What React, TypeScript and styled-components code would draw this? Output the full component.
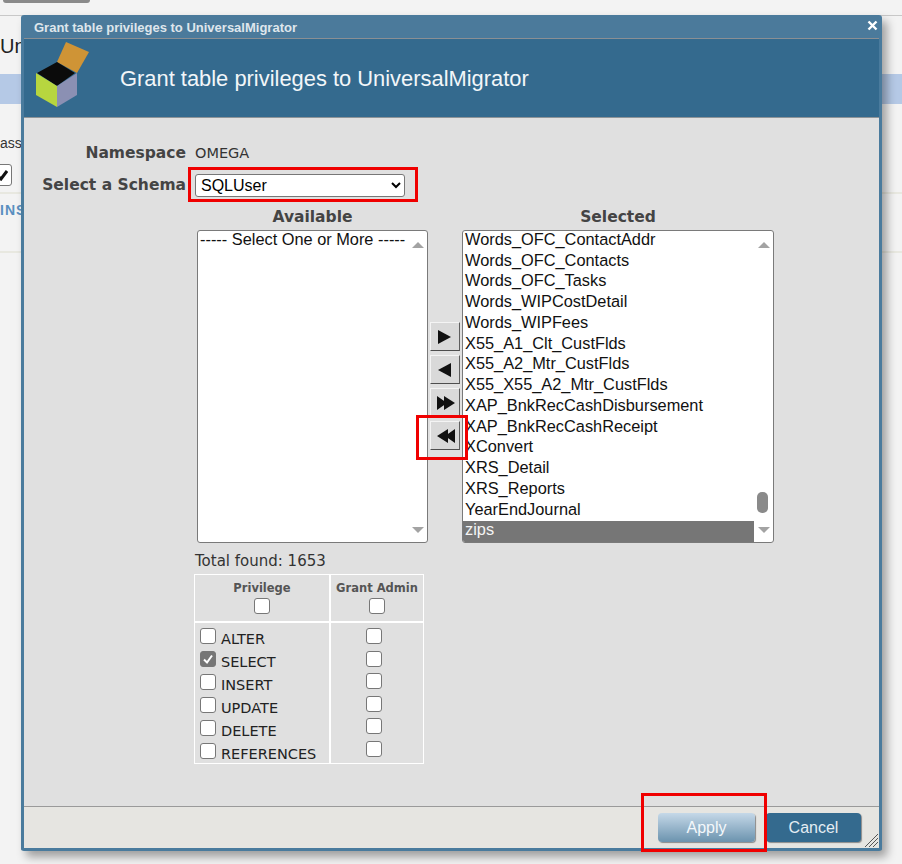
import styled, { createGlobalStyle } from "styled-components";

const GlobalStyle = createGlobalStyle`
  html, body {
    margin: 0;
    padding: 0;
    background: #f3f3f3;
  }
`;

const Page = styled.div`
  position: relative;
  width: 902px;
  height: 864px;
  overflow: hidden;
  font-family: "Liberation Sans", Arial, sans-serif;
`;

const TopButton = styled.div`
  width: 87px;
  height: 3px;
  margin-left: 3px;
  background: #8a8a8a;
  border-radius: 0 0 4px 4px;
`;

const TopRule = styled.div`
  margin-top: 12px;
  height: 1px;
  background: #c8c8c8;
`;

const PageName = styled.div`
  margin-top: 19px;
  height: 39px;
  font-size: 20px;
  color: #222;
  line-height: 22px;
`;

const BlueBar = styled.div`
  height: 30px;
  background: #b5c9e6;
`;

const PassLabel = styled.div`
  margin-top: 30px;
  font-size: 14px;
  line-height: 18px;
  color: #333;
`;

const BackCheck = styled.div`
  margin-top: 12px;
  margin-left: -10px;
  width: 22px;
  height: 22px;
  box-sizing: border-box;
  display: flex;
  align-items: center;
  justify-content: center;
  border: 1px solid #777;
  border-radius: 3px;
  background: #fff;
`;

const BackCheckMark = styled.svg`
  width: 14px;
  height: 12px;
`;

const BackRule = styled.div<{ $gap: number }>`
  margin-top: ${(p) => p.$gap}px;
  height: 2px;
  background: #e8e8e0;
`;

const InsLabel = styled.div`
  margin-top: 8px;
  font-size: 14px;
  line-height: 16px;
  font-weight: bold;
  letter-spacing: 1px;
  color: #5a8fc0;
`;

const Dialog = styled.div`
  position: absolute;
  left: 21px;
  top: 15px;
  width: 861px;
  height: 836px;
  box-sizing: border-box;
  display: flex;
  flex-direction: column;
  border: 3px solid #4a7b9d;
  border-top: 0;
  border-radius: 3px;
  background: #e0e0e0;
  box-shadow: 5px 6px 10px rgba(0, 0, 0, 0.35);
`;

const TitleBar = styled.div`
  height: 24px;
  flex: none;
  display: flex;
  align-items: center;
  justify-content: space-between;
  padding: 2px 1px 0 10px;
  box-sizing: border-box;
  background: #4b7a9b;
  border-bottom: 1px solid #8a8f94;
  font-size: 13px;
  font-weight: bold;
  color: #dfe6ec;
`;

const CloseIcon = styled.svg`
  width: 11px;
  height: 11px;
  margin-top: -4px;
`;

const Header = styled.div`
  position: relative;
  height: 79px;
  flex: none;
  display: flex;
  align-items: center;
  padding: 1px 0 0 96px;
  box-sizing: border-box;
  background: #346a8e;
  border-bottom: 1px solid #8e9498;
  font-size: 21.9px;
  color: #f2f6f9;
`;

const Logo = styled.svg`
  position: absolute;
  left: 12px;
  top: 2px;
  width: 56px;
  height: 68px;
`;

const Body = styled.div`
  flex: 1;
  display: flex;
  flex-direction: column;
  padding: 23px 0 0 18px;
`;

const FieldRow = styled.div<{ $height: number }>`
  display: flex;
  align-items: center;
  height: ${(p) => p.$height}px;
  gap: 9px;
`;

const FieldLabel = styled.div`
  width: 144px;
  text-align: right;
  font-family: "DejaVu Sans", Verdana, sans-serif;
  font-size: 15.5px;
  font-weight: bold;
  white-space: nowrap;
  color: #444;
`;

const FieldValue = styled.div`
  font-family: "DejaVu Sans", Tahoma, sans-serif;
  font-size: 14.5px;
  color: #333;
`;

const SchemaSelect = styled.select`
  width: 210px;
  height: 23px;
  padding: 0 1px;
  font-family: "Liberation Sans", Arial, sans-serif;
  font-size: 16px;
  color: #000;
  background: #fff;
  border: 1px solid #777;
  border-radius: 3px;
`;

const Columns = styled.div`
  display: flex;
  margin-left: 155px;
`;

const ListColumn = styled.div<{ $width: number }>`
  width: ${(p) => p.$width}px;
  display: flex;
  flex-direction: column;
`;

const ListTitle = styled.div`
  height: 24px;
  line-height: 22px;
  text-align: center;
  font-family: "DejaVu Sans", Verdana, sans-serif;
  font-size: 15.5px;
  font-weight: bold;
  color: #444;
`;

const ListBox = styled.div`
  height: 313px;
  box-sizing: border-box;
  display: flex;
  background: #fff;
  border: 1px solid #7a7a7a;
  border-radius: 3px;
  overflow: hidden;
`;

const ListItems = styled.div`
  flex: 1;
  min-width: 0;
  display: flex;
  flex-direction: column;
`;

const ListItem = styled.div<{ $selected?: boolean }>`
  height: 20.75px;
  line-height: 17px;
  padding-left: 2px;
  font-size: 16.35px;
  white-space: nowrap;
  color: ${(p) => (p.$selected ? "#f4f4f4" : "#111")};
  background: ${(p) => (p.$selected ? "#767676" : "transparent")};
`;

const ScrollTrack = styled.div`
  width: 19px;
  flex: none;
  display: flex;
  flex-direction: column;
  align-items: center;
  justify-content: space-between;
  padding: 11px 0 9px;
  box-sizing: border-box;
`;

const ScrollArrow = styled.div<{ $down?: boolean }>`
  width: 0;
  height: 0;
  border-left: 6px solid transparent;
  border-right: 6px solid transparent;
  ${(p) =>
    p.$down ? "border-top: 6px solid #a3a3a3;" : "border-bottom: 6px solid #a3a3a3;"}
`;

const ScrollThumb = styled.div`
  position: absolute;
  right: 5px;
  bottom: 29px;
  width: 11px;
  height: 21px;
  border-radius: 5px;
  background: #8a8a8a;
`;

const SelectedBox = styled(ListBox)`
  position: relative;
`;

const MoveButtons = styled.div`
  width: 34px;
  flex: none;
  display: flex;
  flex-direction: column;
  gap: 4px;
  padding: 116px 0 0 2px;
  box-sizing: border-box;
`;

const MoveButton = styled.button`
  width: 30px;
  height: 29px;
  padding: 0;
  display: flex;
  align-items: center;
  justify-content: center;
  box-sizing: border-box;
  background: #d9d9d9;
  border: 0;
  border-top: 1px solid #f4f4f4;
  border-left: 1px solid #f4f4f4;
  border-right: 1px solid #5e5e5e;
  border-bottom: 1px solid #4e4e4e;
`;

const MoveIcon = styled.svg`
  width: 22px;
  height: 16px;
`;

const TotalFound = styled.div`
  margin: 9px 0 0 153px;
  height: 18px;
  line-height: 18px;
  font-family: "DejaVu Sans", Tahoma, sans-serif;
  font-size: 15px;
  color: #333;
`;

const PrivilegeGrid = styled.div`
  margin: 4px 0 0 152px;
  width: 230px;
  display: grid;
  grid-template-columns: 134px 1fr;
  gap: 2px;
  padding: 1px;
  box-sizing: border-box;
  background: #fff;
`;

const GridHead = styled.div`
  height: 46px;
  box-sizing: border-box;
  display: flex;
  flex-direction: column;
  align-items: center;
  padding-top: 6px;
  gap: 3px;
  background: #e0e0e0;
  font-family: "DejaVu Sans", Verdana, sans-serif;
  font-size: 11.5px;
  font-weight: bold;
  color: #555;
`;

const GridCell = styled.div<{ $center?: boolean }>`
  height: 140px;
  box-sizing: border-box;
  display: flex;
  flex-direction: column;
  align-items: ${(p) => (p.$center ? "center" : "flex-start")};
  padding: 5px ${(p) => (p.$center ? "6px" : "0")} 0 ${(p) => (p.$center ? "0" : "5px")};
  background: #e0e0e0;
`;

const PrivRow = styled.div`
  height: 23.2px;
  display: flex;
  gap: 5px;
  font-family: "DejaVu Sans", Tahoma, sans-serif;
  font-size: 14.5px;
  line-height: 23px;
  color: #222;
`;

const Check = styled.span<{ $checked?: boolean }>`
  width: 16px;
  height: 16px;
  flex: none;
  display: flex;
  align-items: center;
  justify-content: center;
  box-sizing: border-box;
  border: 1px solid #777;
  border-radius: 3px;
  background: ${(p) => (p.$checked ? "#767676" : "#fff")};
`;

const CheckMark = styled.svg`
  width: 12px;
  height: 12px;
`;

const Footer = styled.div`
  height: 42px;
  flex: none;
  display: flex;
  align-items: center;
  justify-content: flex-end;
  gap: 11px;
  padding-right: 18px;
  box-sizing: border-box;
  background: #e6e5e1;
  border-top: 1px solid #9a9a9a;
`;

const FooterButton = styled.button<{ $primary?: boolean }>`
  width: ${(p) => (p.$primary ? 97 : 95)}px;
  height: 29px;
  padding: 0;
  border: 0;
  border-radius: 4px;
  font-family: "Liberation Sans", Arial, sans-serif;
  font-size: 16px;
  color: ${(p) => (p.$primary ? "#f4f8fb" : "#e4edf3")};
  background: ${(p) =>
    p.$primary ? "linear-gradient(#c5d8e8, #6b93ae)" : "#346a8e"};
  box-shadow: 1px 1px 1px #8a8a8a;
`;

const Grip = styled.svg`
  position: absolute;
  right: 0;
  bottom: 0;
  width: 15px;
  height: 15px;
`;

const Callout = styled.div<{ $l: number; $t: number; $w: number; $h: number }>`
  position: absolute;
  left: ${(p) => p.$l}px;
  top: ${(p) => p.$t}px;
  width: ${(p) => p.$w}px;
  height: ${(p) => p.$h}px;
  box-sizing: border-box;
  border: 3px solid #f00000;
  pointer-events: none;
`;

const SELECTED = [
  "Words_OFC_ContactAddr",
  "Words_OFC_Contacts",
  "Words_OFC_Tasks",
  "Words_WIPCostDetail",
  "Words_WIPFees",
  "X55_A1_Clt_CustFlds",
  "X55_A2_Mtr_CustFlds",
  "X55_X55_A2_Mtr_CustFlds",
  "XAP_BnkRecCashDisbursement",
  "XAP_BnkRecCashReceipt",
  "XConvert",
  "XRS_Detail",
  "XRS_Reports",
  "YearEndJournal",
];

const PRIVILEGES = ["ALTER", "SELECT", "INSERT", "UPDATE", "DELETE", "REFERENCES"];

const MOVES = [
  "M4 1 L17 8 L4 15 Z",
  "M17 1 L4 8 L17 15 Z",
  "M3 1 L13 8 L3 15 Z M10 1 L21 8 L10 15 Z",
  "M21 1 L11 8 L21 15 Z M14 1 L3 8 L14 15 Z",
];

export default function App() {
  return (
    <Page>
      <GlobalStyle />
      <TopButton />
      <TopRule />
      <PageName>Un</PageName>
      <BlueBar />
      <PassLabel>ass</PassLabel>
      <BackCheck>
        <BackCheckMark viewBox="0 0 14 12">
          <path d="M3 6 L7 10 L13 2" fill="none" stroke="#111" strokeWidth="3" />
        </BackCheckMark>
      </BackCheck>
      <BackRule $gap={6} />
      <InsLabel>INS</InsLabel>
      <BackRule $gap={33} />

      <Dialog>
        <TitleBar>
          Grant table privileges to UniversalMigrator
          <CloseIcon viewBox="0 0 11 11">
            <path d="M1.5 1.5 L9.5 9.5 M9.5 1.5 L1.5 9.5" stroke="#fff" strokeWidth="2.4" />
          </CloseIcon>
        </TitleBar>
        <Header>
          <Logo viewBox="0 0 56 68">
            <polygon points="30,1 53,11 41,32 21,21" fill="#cf9436" />
            <polygon points="1,32 21,21 39,32 21,45" fill="#0b0b0b" />
            <polygon points="0,32 21,45 21,66 0,54" fill="#b7d63f" />
            <polygon points="21,45 41,32 41,54 21,66" fill="#8b90b3" />
          </Logo>
          Grant table privileges to UniversalMigrator
        </Header>
        <Body>
          <FieldRow $height={23}>
            <FieldLabel>Namespace</FieldLabel>
            <FieldValue>OMEGA</FieldValue>
          </FieldRow>
          <FieldRow $height={42}>
            <FieldLabel>Select a Schema</FieldLabel>
            <SchemaSelect defaultValue="SQLUser">
              <option>SQLUser</option>
            </SchemaSelect>
          </FieldRow>
          <Columns>
            <ListColumn $width={231}>
              <ListTitle>Available</ListTitle>
              <ListBox>
                <ListItems>
                  <ListItem>----- Select One or More -----</ListItem>
                </ListItems>
                <ScrollTrack>
                  <ScrollArrow />
                  <ScrollArrow $down />
                </ScrollTrack>
              </ListBox>
            </ListColumn>
            <MoveButtons>
              {MOVES.map((d) => (
                <MoveButton key={d}>
                  <MoveIcon viewBox="0 0 22 16">
                    <path d={d} fill="#111" />
                  </MoveIcon>
                </MoveButton>
              ))}
            </MoveButtons>
            <ListColumn $width={312}>
              <ListTitle>Selected</ListTitle>
              <SelectedBox>
                <ListItems>
                  {SELECTED.map((name) => (
                    <ListItem key={name}>{name}</ListItem>
                  ))}
                  <ListItem $selected>zips</ListItem>
                </ListItems>
                <ScrollTrack>
                  <ScrollArrow />
                  <ScrollThumb />
                  <ScrollArrow $down />
                </ScrollTrack>
              </SelectedBox>
            </ListColumn>
          </Columns>
          <TotalFound>Total found: 1653</TotalFound>
          <PrivilegeGrid>
            <GridHead>
              Privilege
              <Check />
            </GridHead>
            <GridHead>
              Grant Admin
              <Check />
            </GridHead>
            <GridCell>
              {PRIVILEGES.map((name) => (
                <PrivRow key={name}>
                  <Check $checked={name === "SELECT"}>
                    {name === "SELECT" && (
                      <CheckMark viewBox="0 0 12 12">
                        <path d="M2 6.5 L5 9.5 L10 2.5" fill="none" stroke="#fff" strokeWidth="2" />
                      </CheckMark>
                    )}
                  </Check>
                  {name}
                </PrivRow>
              ))}
            </GridCell>
            <GridCell $center>
              {PRIVILEGES.map((name) => (
                <PrivRow key={name}>
                  <Check />
                </PrivRow>
              ))}
            </GridCell>
          </PrivilegeGrid>
        </Body>
        <Footer>
          <FooterButton $primary>Apply</FooterButton>
          <FooterButton>Cancel</FooterButton>
        </Footer>
        <Grip viewBox="0 0 15 15">
          <path d="M1 14 L14 1 M5 14 L14 5 M9 14 L14 9" stroke="#555" strokeWidth="1" />
        </Grip>
      </Dialog>

      <Callout $l={188} $t={167} $w={230} $h={35} />
      <Callout $l={416} $t={415} $w={52} $h={45} />
      <Callout $l={641} $t={793} $w={126} $h={59} />
    </Page>
  );
}
